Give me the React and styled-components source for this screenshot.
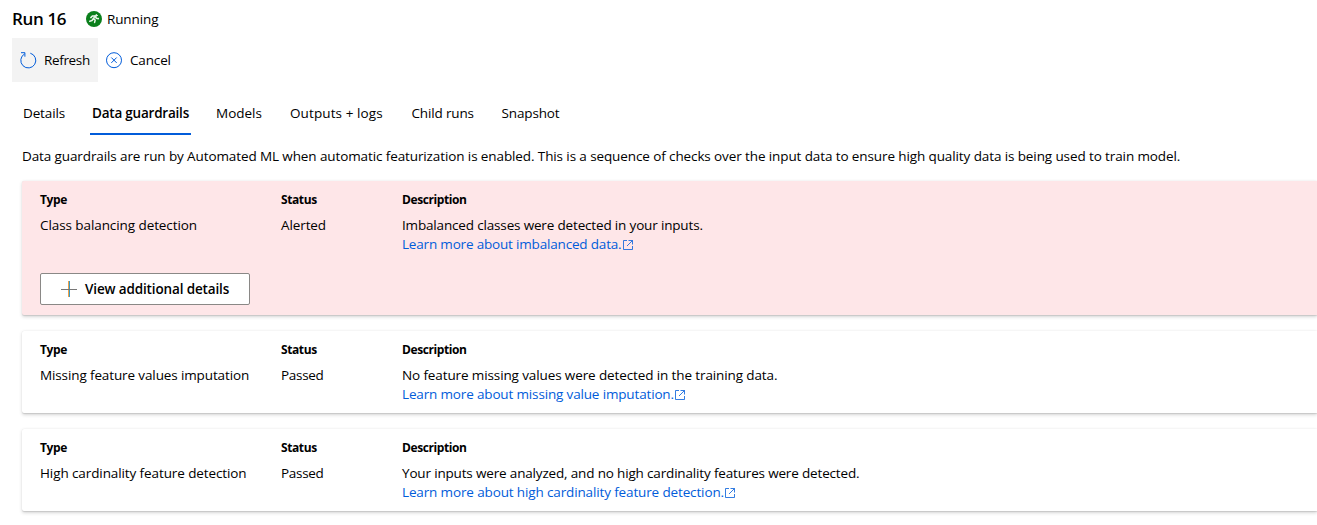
import React from "react";
import styled, { createGlobalStyle } from "styled-components";

const GlobalStyle = createGlobalStyle`
  * { box-sizing: border-box; }
  body {
    margin: 0;
    background: #fff;
    color: #000;
    font: 13.5px/19px "Open Sans", "Noto Sans", sans-serif;
    overflow: hidden;
  }
`;

const Page = styled.main`
  width: 100%;
  height: 525px;
  overflow: hidden;
`;

const Text = styled.span`
  letter-spacing: ${(p) => p.$ls ?? -0.12}px;
  white-space: nowrap;
`;

const Header = styled.header`
  display: flex;
  align-items: center;
  height: 38px;
  padding-left: 12px;
`;

const Title = styled.h1`
  margin: 0;
  width: 74px;
  font-size: 17px;
  line-height: 24px;
  font-weight: 600;
  letter-spacing: -0.35px;
  white-space: nowrap;
`;

const RunStatus = styled.div`
  display: flex;
  align-items: center;
  gap: 5px;
  svg { flex: none; }
`;

const Toolbar = styled.div`
  display: flex;
  height: 44px;
  padding-left: 12px;
`;

const Command = styled.button`
  display: flex;
  align-items: center;
  gap: 7px;
  width: 86px;
  height: 44px;
  padding: 0 0 0 8px;
  border: 0;
  background: ${(p) => (p.$active ? "#f3f3f3" : "transparent")};
  color: inherit;
  font: inherit;
  svg { flex: none; }
`;

const Tabs = styled.nav`
  display: flex;
  height: 53px;
  padding: 10px 0 0 21px;
`;

const Tab = styled.div`
  width: ${(p) => p.$width}px;
  height: 43px;
  padding: 12px 0 0 2px;
  margin-right: ${(p) => p.$after}px;
  border-bottom: 2px solid ${(p) => (p.$selected ? "#015cda" : "transparent")};
  font-weight: ${(p) => (p.$selected ? 600 : 400)};
  white-space: nowrap;
`;

const Intro = styled.p`
  margin: 0;
  padding: 12px 0 15px 22px;
  white-space: nowrap;
`;

const Cards = styled.section`
  display: flex;
  flex-direction: column;
  gap: 16px;
  padding-left: 22px;
`;

const Card = styled.article`
  height: ${(p) => (p.$alert ? 134 : 82)}px;
  padding: 9px 0 0 18px;
  border-radius: 2px 0 0 2px;
  background: ${(p) => (p.$alert ? "#fee6e8" : "#fff")};
  box-shadow: 0 1.6px 3.6px rgba(0, 0, 0, 0.16), 0 0.3px 0.9px rgba(0, 0, 0, 0.1);
`;

const Columns = styled.div`
  display: grid;
  grid-template-columns: 241px 121px 1fr;
`;

const Heading = styled.div`
  height: 26px;
  font-size: 12px;
  font-weight: 700;
  letter-spacing: -0.4px;
`;

const Cell = styled.div`
  display: flex;
  flex-direction: column;
`;

const Link = styled.a`
  display: flex;
  align-items: center;
  color: #015cda;
  svg { flex: none; }
`;

const DetailsButton = styled.button`
  display: flex;
  align-items: center;
  gap: 8px;
  width: 210px;
  height: 32px;
  margin-top: 19px;
  padding: 0 0 0 20px;
  border: 1px solid #8a8886;
  border-radius: 2px;
  background: #fff;
  color: #000;
  font: inherit;
  font-weight: 600;
  svg { flex: none; }
`;

const RunningIcon = () => (
  <svg width="16" height="16" viewBox="0 0 16 16">
    <circle cx="8" cy="8" r="8" fill="#0b7f1c" />
    <g fill="none" stroke="#e6f3e6" strokeLinecap="round" strokeLinejoin="round">
      <path d="M4.8 6.6 6.6 4.9 9 5 7.4 7.8 9.2 9 8.6 11.4" strokeWidth="1.5" />
      <path d="M7.6 7.6 6 9.6 3.8 10.2M9 5.2 10.4 7.2 12.3 7.6" strokeWidth="1.6" />
      <circle cx="10.4" cy="4.4" r=".8" fill="#e6f3e6" />
    </g>
  </svg>
);

const RefreshIcon = () => (
  <svg width="17" height="17" viewBox="0 0 17 17" fill="none" stroke="#015cda" strokeWidth="1">
    <path d="M10.3 1.2A7.5 7.5 0 1 1 4.6 1.9" />
    <path d="M1 .7H4.9V4.7" />
  </svg>
);

const CancelIcon = () => (
  <svg width="17" height="17" viewBox="0 0 17 17" fill="none" stroke="#015cda" strokeWidth="1">
    <circle cx="8" cy="8.2" r="7.5" />
    <path d="m5.3 5.5 5.4 5.4m0-5.4-5.4 5.4" />
  </svg>
);

const PlusIcon = () => (
  <svg width="16" height="16" viewBox="0 0 16 16" fill="none">
    <path d="M8.5 0V16" stroke="#3a9cc4" />
    <path d="M7.5 0V16" stroke="#f0a048" />
    <path d="M0 8.5H16" stroke="#777" />
  </svg>
);

const ExternalIcon = () => (
  <svg width="12" height="12" viewBox="0 0 12 12" fill="none" stroke="#015cda" strokeWidth="1">
    <path d="M5 1.5H1.5V10.5H10.5V7M6.5 1.5H10.5V5.5M10.5 1.5 5 7" strokeOpacity=".8" />
  </svg>
);

const tabs = [
  { label: "Details", width: 45, after: 24, ls: -0.14 },
  { label: "Data guardrails", width: 101, after: 23, ls: -0.22, selected: true },
  { label: "Models", width: 50, after: 24, ls: 0 },
  { label: "Outputs + logs", width: 97, after: 24.5, ls: 0.1 },
  { label: "Child runs", width: 66, after: 24, ls: -0.15 },
  { label: "Snapshot", width: 62, after: 0, ls: -0.14 },
];

const checks = [
  {
    type: "Class balancing detection",
    typeSpacing: -0.08,
    status: "Alerted",
    statusSpacing: -0.1,
    text: "Imbalanced classes were detected in your inputs.",
    textSpacing: -0.165,
    link: "Learn more about imbalanced data.",
    linkSpacing: -0.18,
    alert: true,
  },
  {
    type: "Missing feature values imputation",
    status: "Passed",
    statusSpacing: -0.3,
    text: "No feature missing values were detected in the training data.",
    textSpacing: -0.115,
    link: "Learn more about missing value imputation.",
    linkSpacing: -0.155,
  },
  {
    type: "High cardinality feature detection",
    typeSpacing: -0.1,
    status: "Passed",
    statusSpacing: -0.3,
    text: "Your inputs were analyzed, and no high cardinality features were detected.",
    textSpacing: -0.165,
    link: "Learn more about high cardinality feature detection.",
    linkSpacing: -0.135,
  },
];

export default function App() {
  return (
    <Page>
      <GlobalStyle />
      <Header>
        <Title>Run 16</Title>
        <RunStatus>
          <RunningIcon />
          <Text>Running</Text>
        </RunStatus>
      </Header>
      <Toolbar>
        <Command $active>
          <RefreshIcon />
          <Text $ls={-0.35}>Refresh</Text>
        </Command>
        <Command>
          <CancelIcon />
          <Text $ls={-0.15}>Cancel</Text>
        </Command>
      </Toolbar>
      <Tabs>
        {tabs.map((t) => (
          <Tab key={t.label} $width={t.width} $after={t.after} $selected={t.selected}>
            <Text $ls={t.ls}>{t.label}</Text>
          </Tab>
        ))}
      </Tabs>
      <Intro>
        <Text $ls={-0.107}>
          Data guardrails are run by Automated ML when automatic featurization is enabled. This is a sequence of checks over the input data to ensure high quality data is being used to train model.
        </Text>
      </Intro>
      <Cards>
        {checks.map((c) => (
          <Card key={c.type} $alert={c.alert}>
            <Columns>
              <Cell>
                <Heading>Type</Heading>
                <Text $ls={c.typeSpacing}>{c.type}</Text>
              </Cell>
              <Cell>
                <Heading>Status</Heading>
                <Text $ls={c.statusSpacing}>{c.status}</Text>
              </Cell>
              <Cell>
                <Heading>Description</Heading>
                <Text $ls={c.textSpacing}>{c.text}</Text>
                <Link>
                  <Text $ls={c.linkSpacing}>{c.link}</Text>
                  <ExternalIcon />
                </Link>
              </Cell>
            </Columns>
            {c.alert && (
              <DetailsButton>
                <PlusIcon />
                <Text $ls={-0.14}>View additional details</Text>
              </DetailsButton>
            )}
          </Card>
        ))}
      </Cards>
    </Page>
  );
}
